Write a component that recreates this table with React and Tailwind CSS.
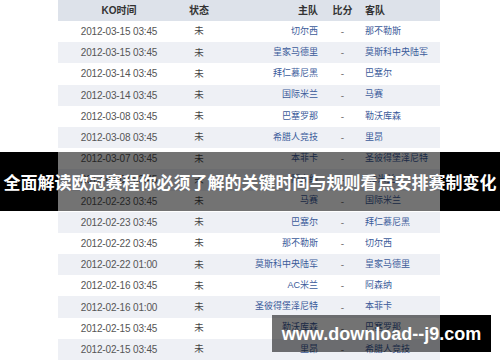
import React from "react";

const rows = [
  ["2012-03-15 03:45", "切尔西", "那不勒斯"],
  ["2012-03-15 03:45", "皇家马德里", "莫斯科中央陆军"],
  ["2012-03-14 03:45", "拜仁慕尼黑", "巴塞尔"],
  ["2012-03-14 03:45", "国际米兰", "马赛"],
  ["2012-03-08 03:45", "巴塞罗那", "勒沃库森"],
  ["2012-03-08 03:45", "希腊人竞技", "里昂"],
  ["2012-03-07 03:45", "本菲卡", "圣彼得堡泽尼特"],
  ["2012-03-07 03:45", "阿森纳", "AC米兰"],
  ["2012-02-23 03:45", "马赛", "国际米兰"],
  ["2012-02-23 03:45", "巴塞尔", "拜仁慕尼黑"],
  ["2012-02-22 03:45", "那不勒斯", "切尔西"],
  ["2012-02-22 01:00", "莫斯科中央陆军", "皇家马德里"],
  ["2012-02-16 03:45", "AC米兰", "阿森纳"],
  ["2012-02-16 01:00", "圣彼得堡泽尼特", "本菲卡"],
  ["2012-02-15 03:45", "勒沃库森", "巴塞罗那"],
  ["2012-02-15 03:45", "里昂", "希腊人竞技"],
];

const cjk = "font-['Liberation_Sans','Noto_Sans_CJK_SC',sans-serif]";

export default function App() {
  return (
    <div className={`relative w-[500px] h-[362px] overflow-hidden bg-white ${cjk}`}>
      <div className="ml-[58px] w-[382px] flex flex-col">
        <div className="grid grid-cols-[122px_38px_105px_39px_78px] h-[21px] items-center bg-[#dde2ea] text-[10px] font-bold text-[#333]">
          <div className="text-center">KO时间</div>
          <div className="text-center">状态</div>
          <div className="text-right pr-[5px]">主队</div>
          <div className="text-center">比分</div>
          <div className="pl-[3px]">客队</div>
        </div>
        {rows.map((r, i) => (
          <div
            key={i}
            className={`grid grid-cols-[122px_38px_105px_39px_78px] h-[21.2px] items-center ${i % 2 === 1 ? "bg-[#eef0f5]" : "bg-white"}`}
          >
            <div className="text-center text-[10px] tracking-[-0.15px] text-[#555]">{r[0]}</div>
            <div className="text-center text-[9.5px] text-[#444]">未</div>
            <div className="text-right pr-[5px] text-[9px] text-[#3b5b9a] whitespace-nowrap">{r[1]}</div>
            <div className="text-center text-[10px] text-[#777]">-</div>
            <div className="pl-[3px] text-[9px] text-[#3b5b9a] whitespace-nowrap">{r[2]}</div>
          </div>
        ))}
      </div>

      <div className="absolute left-0 right-0 top-[152px] h-[59px] flex">
        <div className="w-[58px] bg-black" />
        <div className="flex-1 bg-black/55" />
        <div className="w-[60px] bg-black" />
      </div>
      <div className="absolute left-0 right-0 top-[152px] h-[59px] flex items-center justify-center">
        <span className="text-white font-bold text-[17px] leading-none whitespace-nowrap font-['Noto_Sans_CJK_SC',sans-serif]">
          全面解读欧冠赛程你必须了解的关键时间与规则看点安排赛制变化
        </span>
      </div>

      <div className="absolute left-[272px] top-[315px] h-[37px] w-[219px] flex">
        <div className="w-[168px] bg-black/55" />
        <div className="flex-1 bg-black" />
      </div>
      <div className="absolute left-[272px] top-[315px] h-[37px] w-[219px] flex items-center justify-center">
        <span className="text-white font-bold text-[18px] leading-none font-['Liberation_Sans',sans-serif]">
          www.download--j9.com
        </span>
      </div>
    </div>
  );
}
